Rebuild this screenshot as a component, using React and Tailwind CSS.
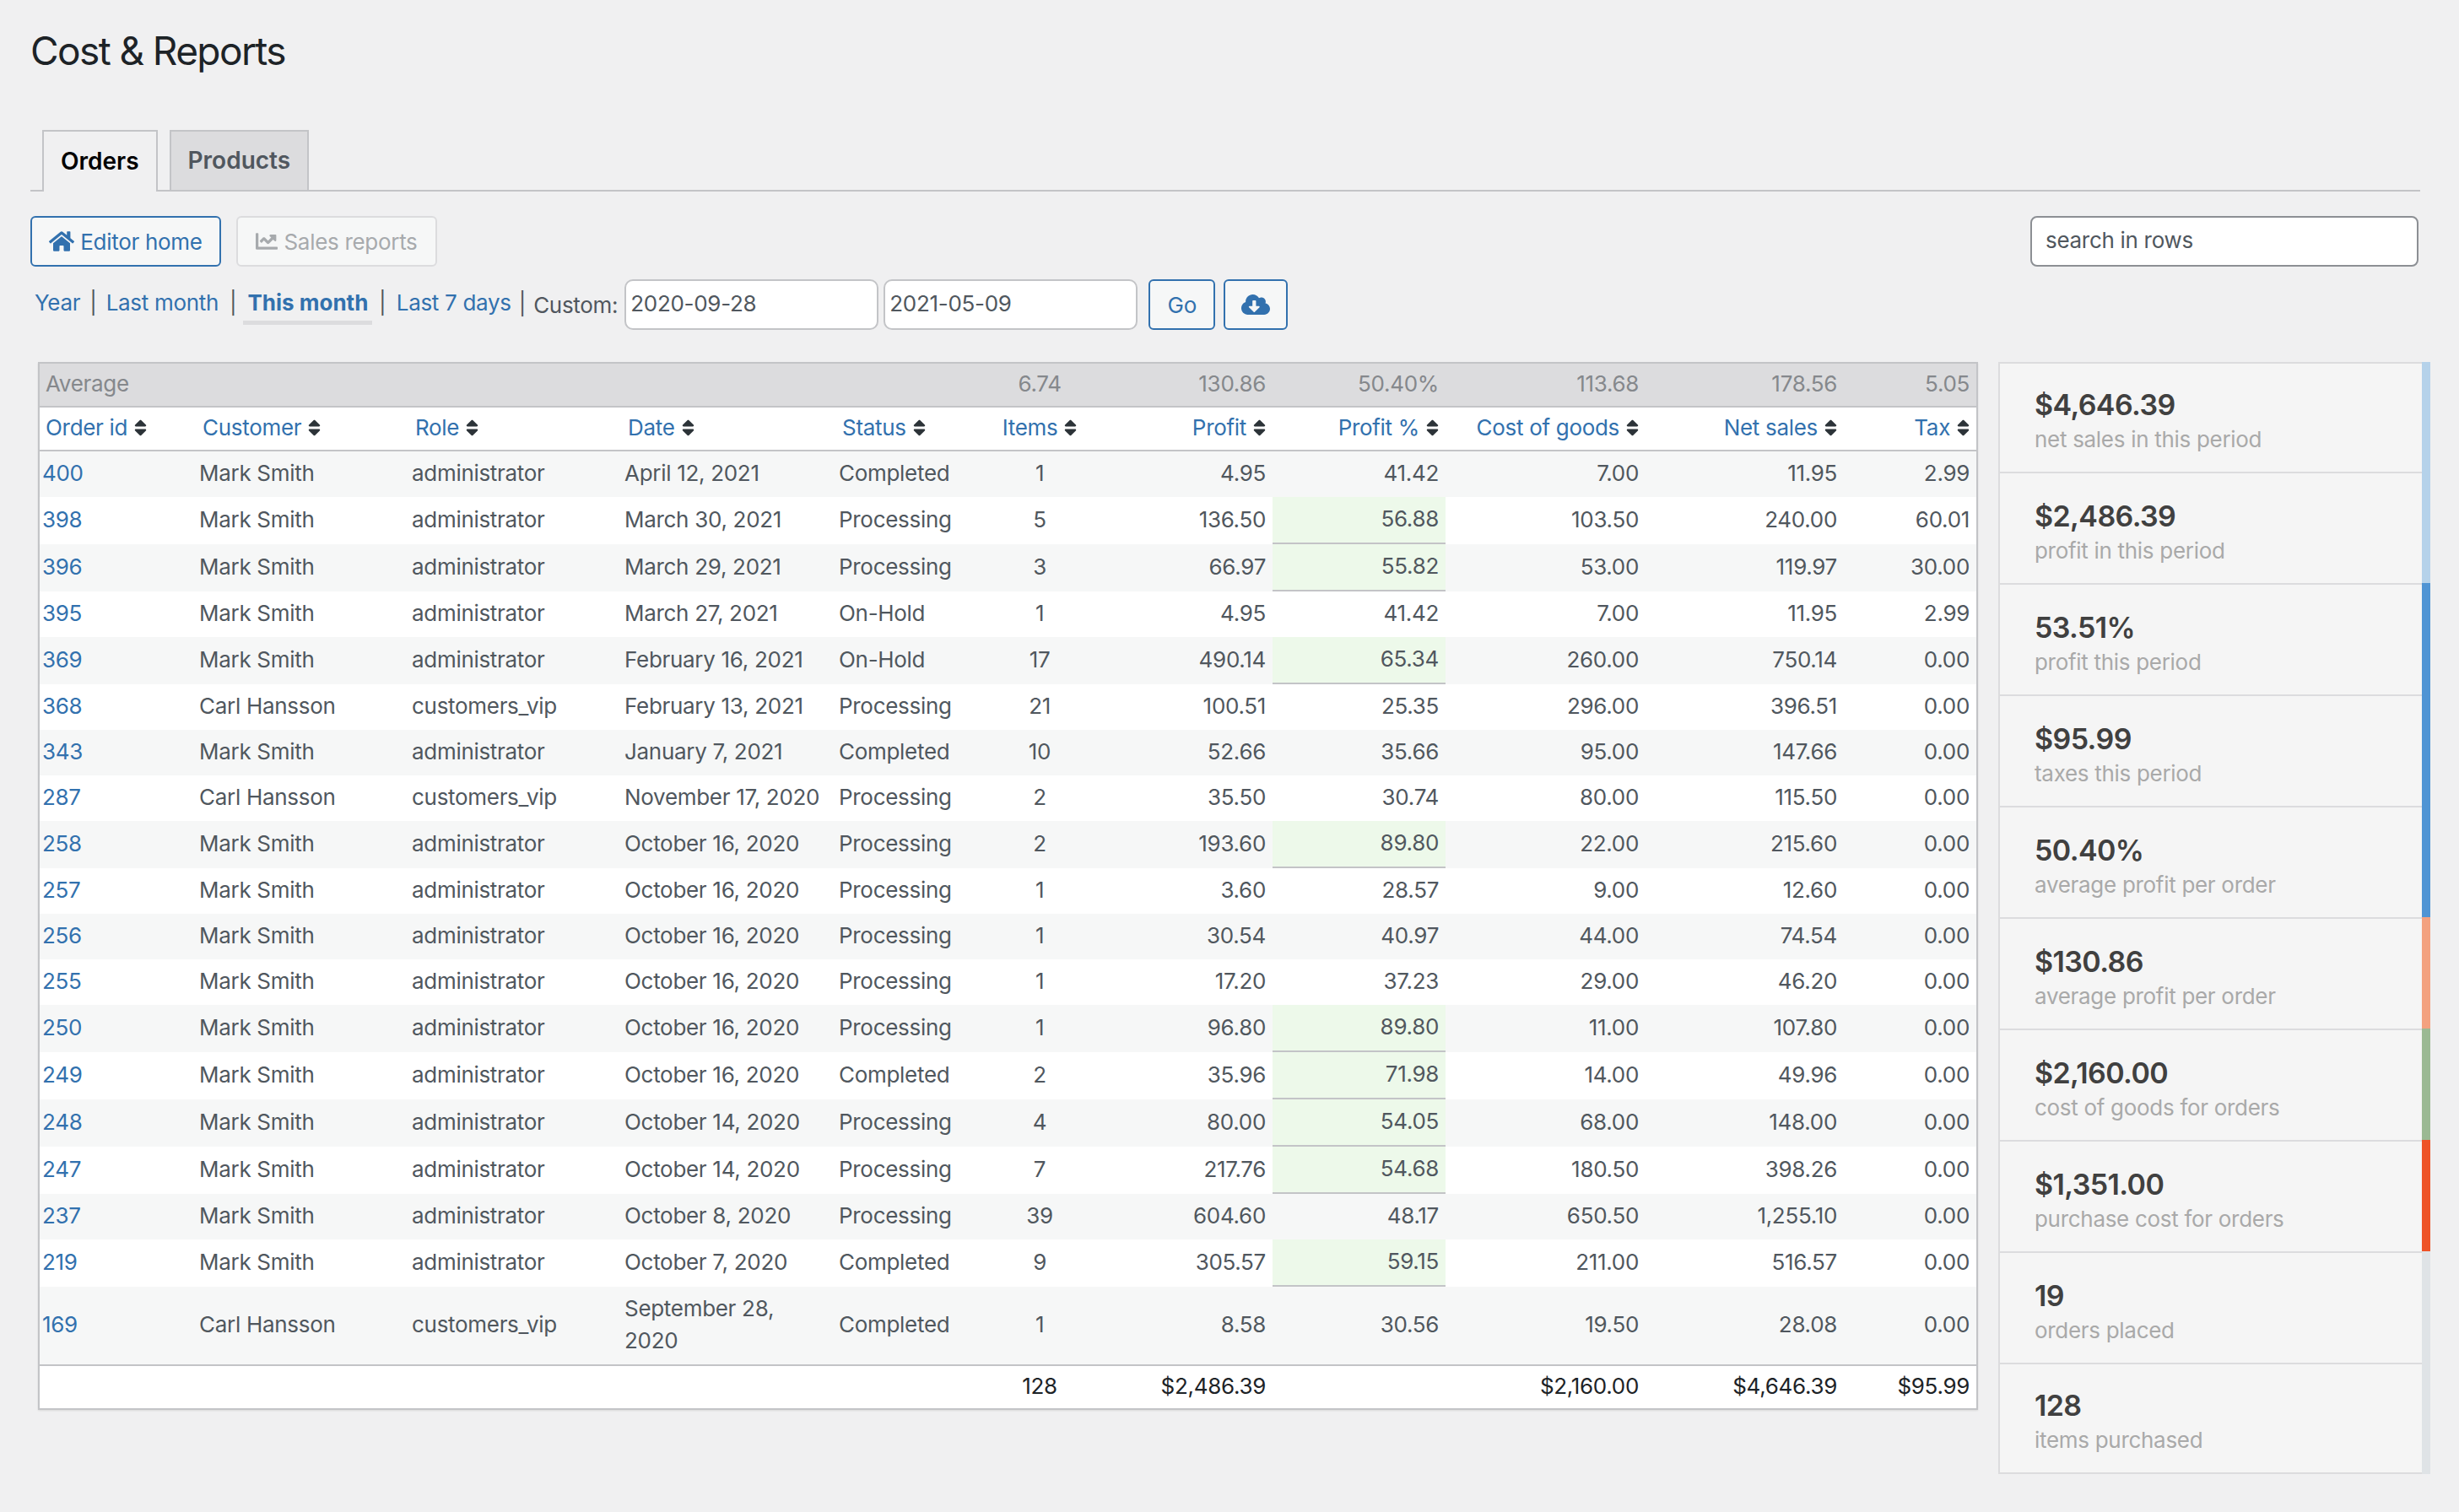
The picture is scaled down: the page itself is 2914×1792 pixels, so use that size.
import { FaChartLine, FaCloudDownloadAlt, FaHome, FaSort } from "react-icons/fa";

const orders = [
  ["400", "Mark Smith", "administrator", "April 12, 2021", "Completed", "1", "4.95", "41.42", "7.00", "11.95", "2.99"],
  ["398", "Mark Smith", "administrator", "March 30, 2021", "Processing", "5", "136.50", "56.88", "103.50", "240.00", "60.01"],
  ["396", "Mark Smith", "administrator", "March 29, 2021", "Processing", "3", "66.97", "55.82", "53.00", "119.97", "30.00"],
  ["395", "Mark Smith", "administrator", "March 27, 2021", "On-Hold", "1", "4.95", "41.42", "7.00", "11.95", "2.99"],
  ["369", "Mark Smith", "administrator", "February 16, 2021", "On-Hold", "17", "490.14", "65.34", "260.00", "750.14", "0.00"],
  ["368", "Carl Hansson", "customers_vip", "February 13, 2021", "Processing", "21", "100.51", "25.35", "296.00", "396.51", "0.00"],
  ["343", "Mark Smith", "administrator", "January 7, 2021", "Completed", "10", "52.66", "35.66", "95.00", "147.66", "0.00"],
  ["287", "Carl Hansson", "customers_vip", "November 17, 2020", "Processing", "2", "35.50", "30.74", "80.00", "115.50", "0.00"],
  ["258", "Mark Smith", "administrator", "October 16, 2020", "Processing", "2", "193.60", "89.80", "22.00", "215.60", "0.00"],
  ["257", "Mark Smith", "administrator", "October 16, 2020", "Processing", "1", "3.60", "28.57", "9.00", "12.60", "0.00"],
  ["256", "Mark Smith", "administrator", "October 16, 2020", "Processing", "1", "30.54", "40.97", "44.00", "74.54", "0.00"],
  ["255", "Mark Smith", "administrator", "October 16, 2020", "Processing", "1", "17.20", "37.23", "29.00", "46.20", "0.00"],
  ["250", "Mark Smith", "administrator", "October 16, 2020", "Processing", "1", "96.80", "89.80", "11.00", "107.80", "0.00"],
  ["249", "Mark Smith", "administrator", "October 16, 2020", "Completed", "2", "35.96", "71.98", "14.00", "49.96", "0.00"],
  ["248", "Mark Smith", "administrator", "October 14, 2020", "Processing", "4", "80.00", "54.05", "68.00", "148.00", "0.00"],
  ["247", "Mark Smith", "administrator", "October 14, 2020", "Processing", "7", "217.76", "54.68", "180.50", "398.26", "0.00"],
  ["237", "Mark Smith", "administrator", "October 8, 2020", "Processing", "39", "604.60", "48.17", "650.50", "1,255.10", "0.00"],
  ["219", "Mark Smith", "administrator", "October 7, 2020", "Completed", "9", "305.57", "59.15", "211.00", "516.57", "0.00"],
  ["169", "Carl Hansson", "customers_vip", "September 28, 2020", "Completed", "1", "8.58", "30.56", "19.50", "28.08", "0.00"],
];

const stats = [
  ["$4,646.39", "net sales in this period", "bg-[#b5d2ea]", "h-[130px] pt-[8px]"],
  ["$2,486.39", "profit in this period", "bg-[#b5d2ea]", "h-[132px] pt-[10px]"],
  ["53.51%", "profit this period", "bg-[#4f94d4]", "h-[132px] pt-[10px]"],
  ["$95.99", "taxes this period", "bg-[#4f94d4]", "h-[132px] pt-[10px]"],
  ["50.40%", "average profit per order", "bg-[#4f94d4]", "h-[132px] pt-[10px]"],
  ["$130.86", "average profit per order", "bg-[#f3a17f]", "h-[132px] pt-[10px]"],
  ["$2,160.00", "cost of goods for orders", "bg-[#9bb993]", "h-[132px] pt-[10px]"],
  ["$1,351.00", "purchase cost for orders", "bg-[#ee5327]", "h-[132px] pt-[10px]"],
  ["19", "orders placed", "bg-[#dfe3e6]", "h-[132px] pt-[10px]"],
  ["128", "items purchased", "bg-[#dfe3e6]", "h-[130px] pt-[8px]"],
];

const columns = [
  { label: "Order id", width: "w-[185px]" },
  { label: "Customer", width: "w-[252px]" },
  { label: "Role", width: "w-[252px]" },
  { label: "Date", width: "w-[254px]" },
  { label: "Status", width: "w-[185px]" },
  { label: "Items", width: "w-[114px]", align: "center" },
  { label: "Profit", width: "w-[219px]", align: "right" },
  { label: "Profit %", width: "w-[205px]", align: "right" },
  { label: "Cost of goods", width: "w-[237px]", align: "right" },
  { label: "Net sales", width: "w-[235px]", align: "right" },
  { label: "Tax", width: "w-[157px]", align: "right" },
];

const averages = ["6.74", "130.86", "50.40%", "113.68", "178.56", "5.05"];
const totals = ["128", "$2,486.39", "", "$2,160.00", "$4,646.39", "$95.99"];

const alignClass = (align) => {
  if (align === "center") return "text-center";
  if (align === "right") return "text-right pr-[8px]";
  return "text-left";
};

const Sep = ({ className }) => <span className={`text-[#50575e] ${className}`}>|</span>;

const Tab = ({ children, active }) => (
  <div
    className={
      active
        ? "h-[73px] -mb-[2px] px-[20px] pb-[2px] flex items-center border-2 border-b-0 border-[#c3c4c7] bg-[#f0f0f1] text-[#000] text-[28px] font-semibold tracking-normal"
        : "h-[71px] px-[20px] pb-[2px] flex items-center border-2 border-b-0 border-[#c3c4c7] bg-[#dcdcde] text-[#50575e] text-[28px] font-semibold tracking-normal"
    }
  >
    {children}
  </div>
);

const App = () => {
  return (
    <div className="w-[2914px] min-h-[1792px] bg-[#f0f0f1] pl-[36px] pt-[30px] font-['Inter',sans-serif] text-[26px] tracking-[-0.3px] text-[#50575e]">
      <h1 className="text-[46px] leading-[60px] font-normal tracking-[-1.6px] text-[#1d2327]">Cost &amp; Reports</h1>

      <div className="mt-[64px] w-[2832px] pl-[14px] flex gap-[14px] border-b-2 border-[#c3c4c7]">
        <Tab active>Orders</Tab>
        <Tab>Products</Tab>
      </div>

      <div className="mt-[29px] w-[2830px] flex items-center justify-between">
        <div className="flex gap-[18px]">
          <button className="h-[60px] w-[226px] flex items-center justify-center gap-[7px] rounded-[6px] border-2 border-[#3271ae] bg-[#f6f7f7] text-[#3271ae]">
            <FaHome size={30} />
            Editor home
          </button>
          <button className="h-[60px] w-[238px] flex items-center justify-center gap-[7px] rounded-[6px] border-2 border-[#dcdcde] bg-[#f6f7f7] text-[#a7aaad]">
            <FaChartLine size={26} />
            Sales reports
          </button>
        </div>
        <input
          className="h-[60px] w-[460px] rounded-[8px] border-2 border-[#8c8f94] bg-white px-[16px] pb-[3px] text-[26px] text-[#50575e] placeholder:text-[#50575e] outline-none"
          placeholder="search in rows"
        />
      </div>

      <div className="mt-[15px] h-[60px] flex items-center">
        <a className="ml-[5px] mb-[6px] text-[#3271ae]">Year</a>
        <Sep className="px-[11px] mb-[6px]" />
        <a className="mb-[6px] text-[#3271ae]">Last month</a>
        <Sep className="px-[13px] mb-[6px]" />
        <a className="relative mb-[6px] font-bold tracking-normal text-[#3271ae]">
          This month
          <span className="absolute left-[-5px] right-[-5px] top-[41px] h-[5px] bg-[#dcdcde]" />
        </a>
        <Sep className="px-[12.5px] mb-[6px]" />
        <a className="mb-[6px] text-[#3271ae]">Last 7 days</a>
        <Sep className="px-[9px] mb-[4px]" />
        <span className="mr-[8px]">Custom:</span>
        <input
          className="h-[60px] w-[301px] rounded-[10px] border-2 border-[#c3c4c7] bg-white px-[5px] pb-[4px] text-[26px] text-[#50575e] outline-none"
          defaultValue="2020-09-28"
        />
        <input
          className="ml-[6px] h-[60px] w-[301px] rounded-[10px] border-2 border-[#c3c4c7] bg-white px-[5px] pb-[4px] text-[26px] text-[#50575e] outline-none"
          defaultValue="2021-05-09"
        />
        <button className="ml-[13px] h-[60px] w-[79px] rounded-[6px] border-2 border-[#3271ae] bg-[#f6f7f7] text-[#3271ae]">Go</button>
        <button className="ml-[10px] h-[60px] w-[76px] flex items-center justify-center rounded-[6px] border-2 border-[#3271ae] bg-[#f6f7f7] text-[#3271ae]">
          <FaCloudDownloadAlt size={34} />
        </button>
      </div>

      <div className="mt-[38px] ml-[9px] flex items-start gap-[24px]">
        <div className="w-[2299px] border-2 border-[#c3c4c7] bg-white shadow-[0_1px_2px_rgba(0,0,0,0.1)]">
          <table className="w-[2295px] table-fixed border-separate border-spacing-0 text-[26px] leading-[38px]">
            <colgroup>
              {columns.map((col) => (
                <col key={col.label} className={col.width} />
              ))}
            </colgroup>
            <thead>
              <tr className="bg-[#dcdcde] text-[#85888c]">
                <td className="h-[52px] pb-[2px] pl-[7px] border-b-2 border-[#c3c4c7]" colSpan={5}>Average</td>
                {averages.map((value, i) => (
                  <td key={i} className={`h-[52px] pb-[2px] border-b-2 border-[#c3c4c7] ${alignClass(columns[i + 5].align)}`}>
                    {value}
                  </td>
                ))}
              </tr>
              <tr className="bg-white">
                {columns.map((col, i) => (
                  <th key={col.label} className={`h-[52px] pb-[2px] font-normal border-b-2 border-[#c3c4c7] ${col.align ? alignClass(col.align) : i === 0 ? "text-left pl-[7px]" : "text-left pl-[8px]"}`}>
                    <span className="text-[#3271ae]">{col.label}</span>
                    <FaSort className="inline-block w-[15px] h-[24px] ml-[8px] -mt-[3px] text-[#2c3338]" />
                  </th>
                ))}
              </tr>
            </thead>
            <tbody>
              {orders.map((row, r) => (
                <tr key={row[0]} className={r % 2 === 0 ? "bg-[#f6f7f7]" : "bg-white"}>
                  {row.map((cell, c) => {
                    const good = c === 7 && parseFloat(cell) > 50;
                    return (
                      <td
                        key={c}
                        className={`pt-[7px] pb-[9px] ${columns[c].align ? alignClass(columns[c].align) : c === 0 ? "pl-[3px] pr-[8px]" : "pl-[4px] pr-[8px]"} ${good ? "bg-[#edf9ea] border-b-2 border-[#c3c4c7]" : ""} ${c === 0 ? "text-[#3271ae]" : ""}`}
                      >
                        {cell}
                      </td>
                    );
                  })}
                </tr>
              ))}
            </tbody>
            <tfoot>
              <tr className="bg-white text-[#1d2327]">
                <td className="h-[52px] pb-[2px] border-t-2 border-[#c3c4c7]" colSpan={5} />
                {totals.map((value, i) => (
                  <td key={i} className={`h-[52px] pb-[2px] border-t-2 border-[#c3c4c7] ${alignClass(columns[i + 5].align)}`}>
                    {value}
                  </td>
                ))}
              </tr>
            </tfoot>
          </table>
        </div>

        <div className="w-[512px] border-t-2 border-[#dcdcde]">
          {stats.map(([value, label, bar, height]) => (
            <div key={value + label} className={`relative ${height} pl-[41px] flex flex-col justify-center bg-[#f5f5f5] border-l-2 border-b-2 border-[#dcdcde]`}>
              <div className="text-[34px] leading-[42px] font-semibold tracking-[-0.6px] text-[#404040]">{value}</div>
              <div className="mt-[1px] text-[26px] leading-[38px] text-[#a9a9a9]">{label}</div>
              <span className={`absolute right-0 top-[-2px] bottom-[-2px] w-[10px] ${bar}`} />
            </div>
          ))}
        </div>
      </div>
    </div>
  );
};

export default App;
